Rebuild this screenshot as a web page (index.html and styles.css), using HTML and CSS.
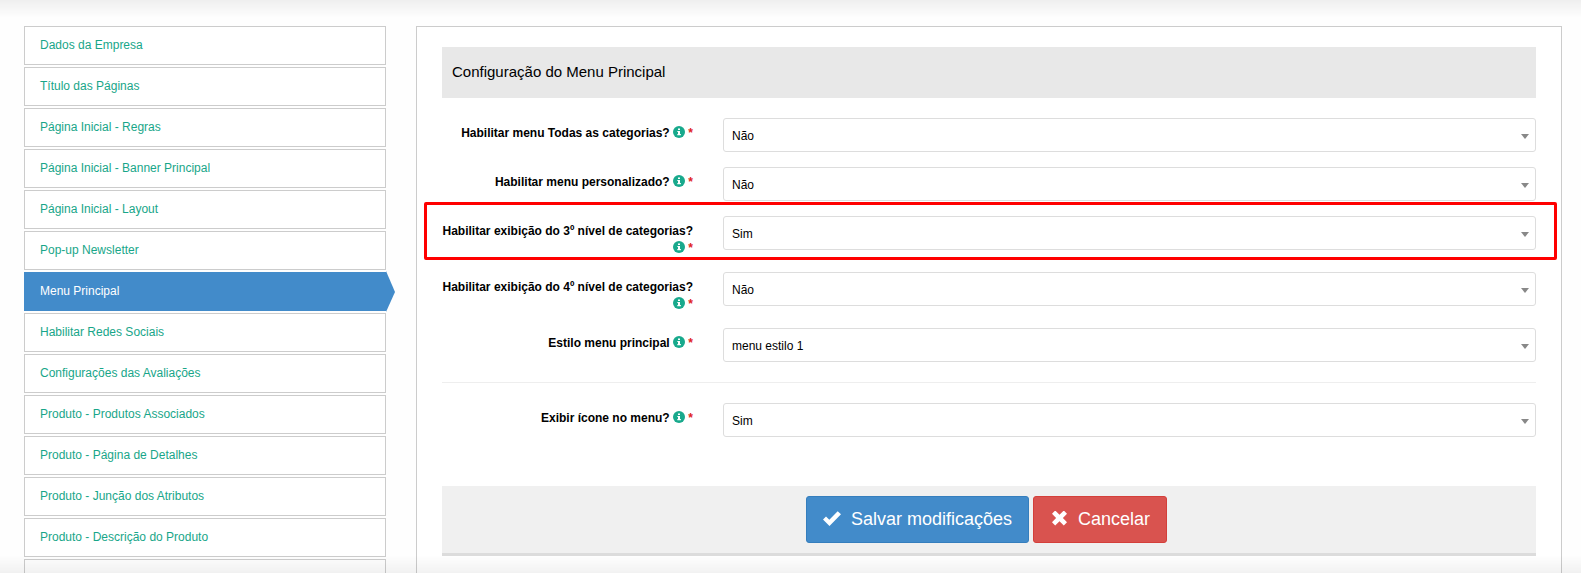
FILE: index.html
```html
<!DOCTYPE html>
<html lang="pt-BR">
<head>
    <meta charset="UTF-8">
    <meta name="viewport" content="width=device-width, initial-scale=1.0">
    <title>Configuração do Menu Principal</title>
    <link rel="stylesheet" href="styles.css">
</head>
<body>
    <!-- icons used by the form -->
    <svg class="sprite" aria-hidden="true">
        <symbol id="icon-info" viewBox="0 0 12 12">
            <circle cx="6" cy="6" r="6" fill="#18a98c"/>
            <path fill="#fff" d="M5 2.500h2v1.500H5zM4.300 5H7v3h.9v1.200H4.300V8H5V6.100h-.7z"/>
        </symbol>
        <symbol id="icon-check" viewBox="0 2 18 18">
            <path fill="#fff" d="M0 10.500 3 7.500 6.300 10.800 14.700 2.200 18 5.300 6.500 17z"/>
        </symbol>
        <symbol id="icon-times" viewBox="0 2 18 18">
            <path fill="#fff" d="M5.200 1.500 9.500 5.700 13.800 1.500 17 4.700 12.900 9 17 13.300 13.800 16.500 9.500 12.300 5.200 16.500 2 13.300 6.100 9 2 4.700z"/>
        </symbol>
    </svg>

    <div class="row page">
        <nav class="col-side">
            <ul class="menu">
                <li><a href="#">Dados da Empresa</a></li>
                <li><a href="#">Título das Páginas</a></li>
                <li><a href="#">Página Inicial - Regras</a></li>
                <li><a href="#">Página Inicial - Banner Principal</a></li>
                <li><a href="#">Página Inicial - Layout</a></li>
                <li><a href="#">Pop-up Newsletter</a></li>
                <li class="active"><a href="#">Menu Principal</a></li>
                <li><a href="#">Habilitar Redes Sociais</a></li>
                <li><a href="#">Configurações das Avaliações</a></li>
                <li><a href="#">Produto - Produtos Associados</a></li>
                <li><a href="#">Produto - Página de Detalhes</a></li>
                <li><a href="#">Produto - Junção dos Atributos</a></li>
                <li><a href="#">Produto - Descrição do Produto</a></li>
                <li class="empty"></li>
            </ul>
        </nav>

        <main class="col-main">
            <form class="panel">
                <h1 class="panel-title">Configuração do Menu Principal</h1>

                <div class="row form-group">
                    <label class="col-side" for="todas">Habilitar menu Todas as categorias? <span class="marks"><svg class="info"><use href="#icon-info"/></svg>&nbsp;<span class="required">*</span></span></label>
                    <div class="col-main">
                        <div class="select">
                            <select id="todas"><option>Não</option><option>Sim</option></select>
                        </div>
                    </div>
                </div>

                <div class="row form-group">
                    <label class="col-side" for="personalizado">Habilitar menu personalizado? <span class="marks"><svg class="info"><use href="#icon-info"/></svg>&nbsp;<span class="required">*</span></span></label>
                    <div class="col-main">
                        <div class="select">
                            <select id="personalizado"><option>Não</option><option>Sim</option></select>
                        </div>
                    </div>
                </div>

                <div class="row form-group highlight">
                    <label class="col-side" for="nivel3">Habilitar exibição do 3º nível de categorias? <span class="marks"><svg class="info"><use href="#icon-info"/></svg>&nbsp;<span class="required">*</span></span></label>
                    <div class="col-main">
                        <div class="select">
                            <select id="nivel3"><option>Sim</option><option>Não</option></select>
                        </div>
                    </div>
                </div>

                <div class="row form-group">
                    <label class="col-side" for="nivel4">Habilitar exibição do 4º nível de categorias? <span class="marks"><svg class="info"><use href="#icon-info"/></svg>&nbsp;<span class="required">*</span></span></label>
                    <div class="col-main">
                        <div class="select">
                            <select id="nivel4"><option>Não</option><option>Sim</option></select>
                        </div>
                    </div>
                </div>

                <div class="row form-group">
                    <label class="col-side" for="estilo">Estilo menu principal <span class="marks"><svg class="info"><use href="#icon-info"/></svg>&nbsp;<span class="required">*</span></span></label>
                    <div class="col-main">
                        <div class="select">
                            <select id="estilo"><option>menu estilo 1</option></select>
                        </div>
                    </div>
                </div>

                <hr>

                <div class="row form-group">
                    <label class="col-side" for="icone">Exibir ícone no menu? <span class="marks"><svg class="info"><use href="#icon-info"/></svg>&nbsp;<span class="required">*</span></span></label>
                    <div class="col-main">
                        <div class="select">
                            <select id="icone"><option>Sim</option><option>Não</option></select>
                        </div>
                    </div>
                </div>

                <div class="form-actions">
                    <button type="submit" class="btn btn-primary"><svg><use href="#icon-check"/></svg>Salvar modificações</button>
                    <button type="button" class="btn btn-danger"><svg><use href="#icon-times"/></svg>Cancelar</button>
                </div>
            </form>
        </main>
    </div>
</body>
</html>
```

FILE: styles.css
```css
* {
    box-sizing: border-box;
}
body {
    margin: 0;
    height: 100vh;
    overflow: hidden;
    font-family: Arial, "Liberation Sans", sans-serif;
    font-size: 12px;
    line-height: 17px;
    color: #000;
    background-color: #fefefe;
}
/* fades at the top and bottom of the window */
body::before,
body::after {
    content: "";
    position: fixed;
    left: 0;
    right: 0;
    height: 18px;
    pointer-events: none;
}
body::before {
    top: 0;
    background: linear-gradient(rgba(0, 0, 0, 0.06), rgba(0, 0, 0, 0));
}
body::after {
    bottom: 0;
    background: linear-gradient(rgba(0, 0, 0, 0), rgba(0, 0, 0, 0.05));
}
.sprite {
    display: none;
}

/* grid */
.row {
    display: flex;
}
.col-side,
.col-main {
    padding: 0 15px;
}
.col-side {
    width: 25%;
}
.col-main {
    width: 75%;
}
.page {
    padding: 26px 4px 0 9px;
}

/* side menu */
.menu {
    list-style: none;
    margin: 0;
    padding: 0;
    display: flex;
    flex-direction: column;
    gap: 2px;
}
.menu li {
    position: relative;
}
.menu a {
    display: block;
    padding: 10px 15px;
    border: 1px solid #ccc;
    color: #18a689;
    background-color: #fff;
    text-decoration: none;
}
.menu .empty {
    height: 39px;
    border: 1px solid #ccc;
}
.menu .active a {
    color: #fff;
    background-color: #428bca;
    border-color: #428bca;
}
.menu .active::after {
    content: "";
    position: absolute;
    top: -1px;
    left: 100%;
    border: solid transparent;
    border-width: 21px 0 20px 9px;
    border-left-color: #428bca;
}

/* form */
.panel {
    min-height: 100vh;
    padding: 20px 25px;
    border: 1px solid #ccc;
    background-color: #fff;
}
.panel-title {
    margin: 0 0 20px;
    padding: 16px 10px 18px;
    font-size: 15px;
    line-height: 17px;
    font-weight: normal;
    background-color: #e8e8e8;
}
.form-group {
    position: relative;
    margin: 0 -15px 15px;
}
.form-group label {
    padding-top: 7px;
    font-weight: bold;
    text-align: right;
}
.marks {
    white-space: nowrap;
}
.info {
    width: 12px;
    height: 12px;
    vertical-align: -1px;
}
.required {
    color: #e02222;
}
.highlight::after {
    content: "";
    position: absolute;
    top: -14px;
    right: -6px;
    bottom: -3px;
    left: -3px;
    border: 3px solid #f00;
    border-radius: 2px;
    pointer-events: none;
}
.select {
    position: relative;
}
.select select {
    appearance: none;
    display: block;
    width: 100%;
    height: 34px;
    padding: 2px 24px 0 8px;
    border: 1px solid #ddd;
    border-radius: 3px;
    font: inherit;
    color: #000;
    background-color: #fff;
}
.select::after {
    content: "";
    position: absolute;
    top: 16px;
    right: 7px;
    border: solid transparent;
    border-width: 5px 4px 0;
    border-top-color: #888;
    pointer-events: none;
}
hr {
    margin: 20px 0;
    border: 0;
    border-top: 1px solid #eee;
}
.form-actions {
    margin-top: 49px;
    padding: 10px 5px 10px 0;
    display: flex;
    justify-content: center;
    gap: 4px;
    background-color: #f0f0f0;
    border-bottom: 3px solid #dcdcdc;
}
.btn {
    display: flex;
    align-items: center;
    gap: 10px;
    padding: 10px 16px;
    border: 1px solid;
    border-radius: 3px;
    font-family: inherit;
    font-size: 18px;
    line-height: 25px;
    color: #fff;
    cursor: pointer;
}
.btn svg {
    width: 18px;
    height: 18px;
}
.btn-primary {
    background-color: #428bca;
    border-color: #357ebd;
}
.btn-danger {
    background-color: #d9534f;
    border-color: #d43f3a;
}
```
